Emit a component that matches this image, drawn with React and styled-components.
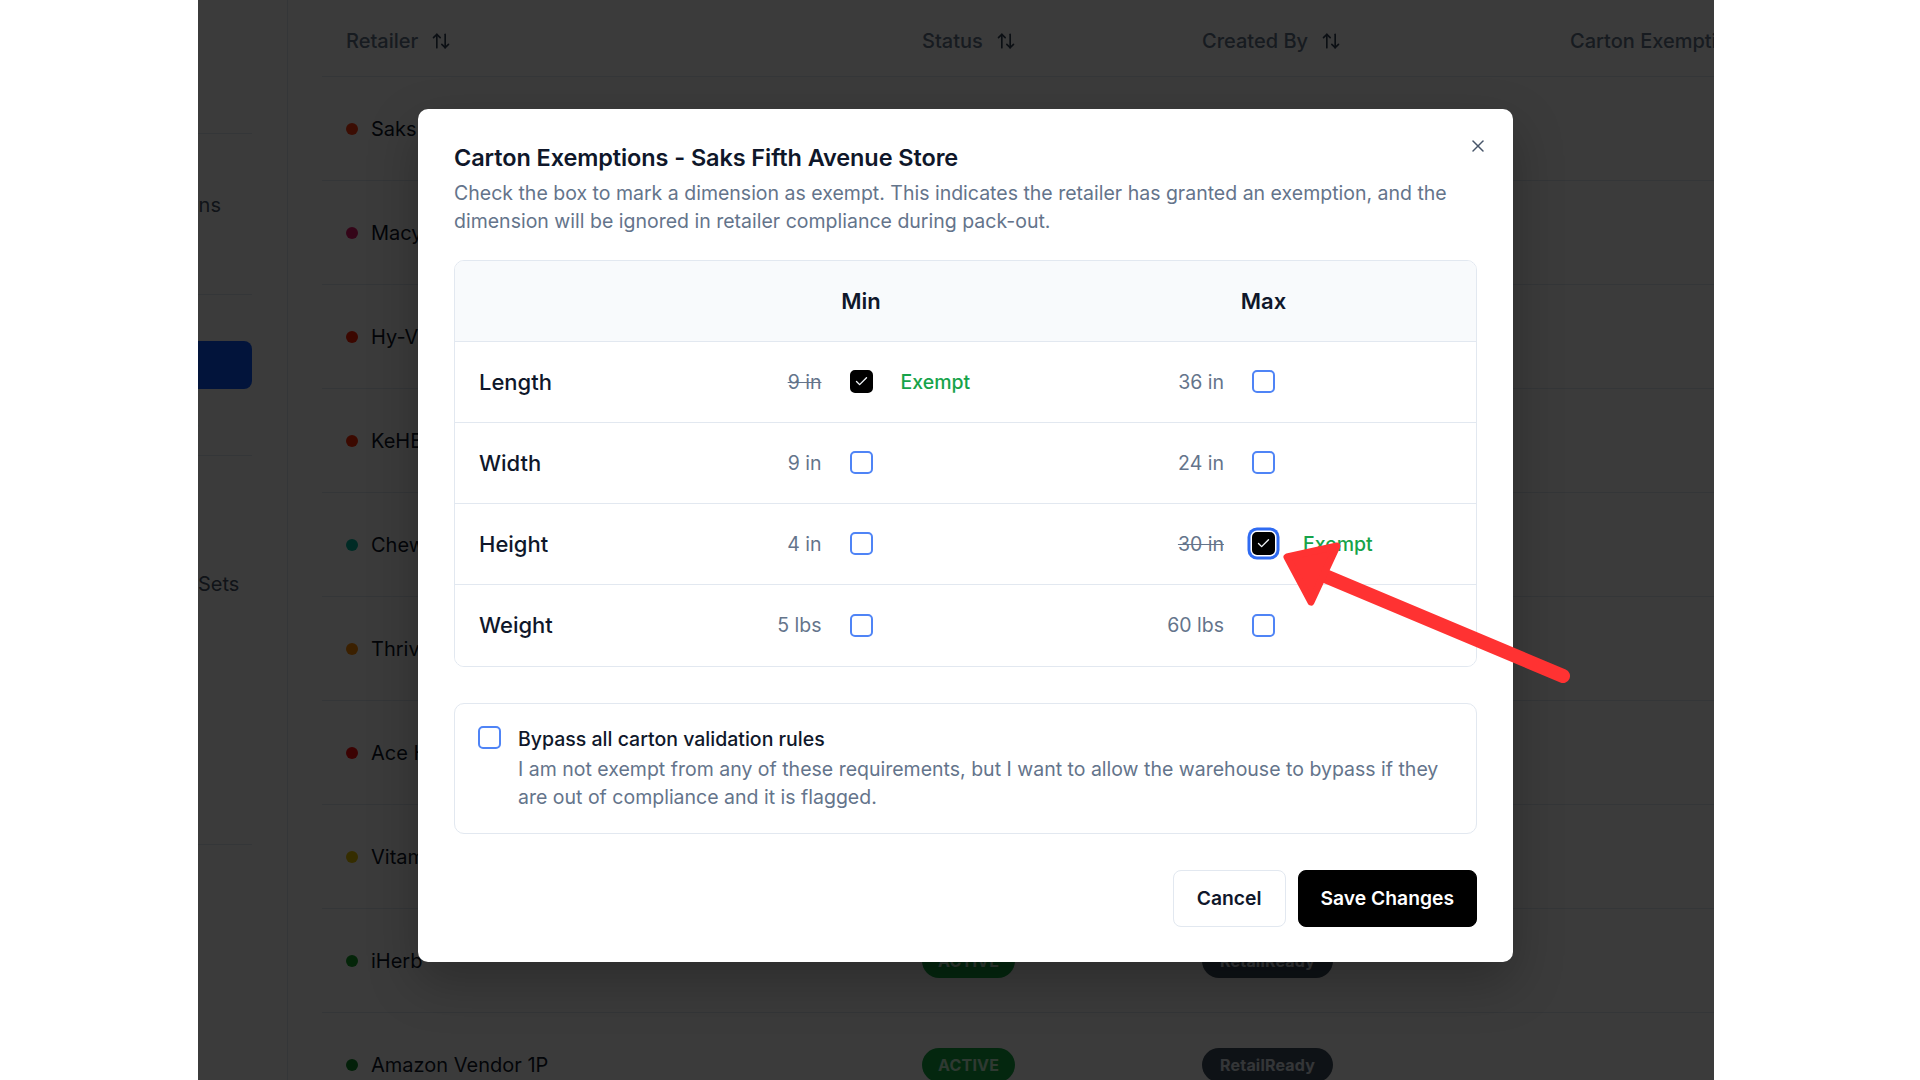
import React from "react";
import styled, { createGlobalStyle } from "styled-components";
import { ArrowUpDown, Check, X } from "lucide-react";

const GlobalStyle = createGlobalStyle`
  html, body {
    margin: 0;
    padding: 0;
    background: #ffffff;
  }
  body {
    font-family: Inter, "Noto Sans", "Liberation Sans", sans-serif;
    -webkit-font-smoothing: antialiased;
  }
  * {
    box-sizing: border-box;
  }
`;

const Page = styled.div`
  position: relative;
  width: 1920px;
  height: 1080px;
  padding-left: 198px;
  background: #ffffff;
  overflow: hidden;
`;

const Frame = styled.div`
  position: relative;
  width: 1516px;
  height: 1080px;
  overflow: hidden;
  background: #ffffff;
`;

const Shell = styled.div`
  display: grid;
  grid-template-columns: 240px 1fr;
  margin-left: -150px;
  height: 100%;
`;

/* ---------- sidebar (mostly cropped off) ---------- */

const Sidebar = styled.aside`
  display: flex;
  flex-direction: column;
  padding: 0 35px 0 20px;
  border-right: 1px solid #e2e8f0;
`;

const NavSection = styled.div`
  height: ${(p) => p.$h}px;
  padding-top: ${(p) => p.$pad}px;
  border-bottom: 1px solid #e2e8f0;
  display: flex;
  flex-direction: column;
`;

const NavItem = styled.div`
  height: ${(p) => (p.$active ? 51 : 28)}px;
  margin-bottom: 19px;
  padding-left: ${(p) => p.$indent || 12}px;
  display: flex;
  align-items: center;
  border-radius: 8px;
  font-size: 20px;
  line-height: 28px;
  white-space: nowrap;
  color: ${(p) => (p.$active ? "#ffffff" : "#475569")};
  background: ${(p) => (p.$active ? "#0a58ff" : "transparent")};
`;

/* ---------- table behind the dialog ---------- */

const Main = styled.main`
  padding-left: 34px;
`;

const Grid = styled.div`
  display: grid;
  grid-template-columns: 576px 280px 368px 420px;
  height: ${(p) => p.$h}px;
  border-bottom: 1px solid #e2e8f0;
`;

const HeadCell = styled.div`
  display: flex;
  align-items: center;
  gap: 13px;
  padding: 6px 24px 0;
  font-size: 20px;
  font-weight: 500;
  color: #64748b;
  white-space: nowrap;
  svg {
    color: #334155;
  }
`;

const Cell = styled.div`
  display: flex;
  align-items: center;
  gap: 13px;
  padding: 0 24px;
  font-size: 20px;
  color: #0f172a;
  white-space: nowrap;
`;

const Dot = styled.span`
  width: 12px;
  height: 12px;
  border-radius: 50%;
  background: ${(p) => p.$color};
  flex-shrink: 0;
`;

const Pill = styled.span`
  display: inline-flex;
  align-items: center;
  height: 34px;
  padding: 0 ${(p) => (p.$tone === "green" ? 16 : 18)}px;
  border-radius: 999px;
  font-size: 16px;
  font-weight: 700;
  letter-spacing: 0.2px;
  color: ${(p) => (p.$tone === "green" ? "#c9f7d8" : "#e2e8f0")};
  background: ${(p) => (p.$tone === "green" ? "#14a844" : "#3f4f5f")};
`;

const Overlay = styled.div`
  position: absolute;
  inset: 0;
  background: rgba(0, 0, 0, 0.768);
`;

/* ---------- dialog ---------- */

const Dialog = styled.div`
  position: absolute;
  left: 220px;
  top: 109px;
  width: 1095px;
  padding: 35px 36px;
  display: flex;
  flex-direction: column;
  background: #ffffff;
  border-radius: 10px;
  box-shadow: 0 20px 50px rgba(0, 0, 0, 0.25);
  color: #0f172a;
`;

const Close = styled.button`
  position: absolute;
  top: 27px;
  right: 25px;
  padding: 0;
  border: 0;
  background: none;
  display: flex;
  color: #475569;
`;

const Title = styled.h2`
  margin: 0;
  font-size: 23.5px;
  line-height: 28px;
  font-weight: 600;
  letter-spacing: -0.1px;
`;

const Description = styled.p`
  margin: 7px 0 0;
  font-size: 19.5px;
  line-height: 28px;
  color: #64748b;
`;

const ExemptTable = styled.div`
  margin-top: 25px;
  border: 1px solid #e2e8f0;
  border-radius: 10px;
  overflow: hidden;
`;

const TableRow = styled.div`
  display: grid;
  grid-template-columns: 216px 380px 1fr;
  align-items: center;
  height: ${(p) => (p.$head ? 80.5 : 81)}px;
  background: ${(p) => (p.$head ? "#f8fafc" : "#ffffff")};
  &:not(:last-child) {
    border-bottom: 1px solid #e2e8f0;
  }
`;

const ColHead = styled.div`
  text-align: center;
  font-size: 22px;
  font-weight: 600;
`;

const Label = styled.div`
  padding-left: 24px;
  font-size: 22px;
  font-weight: 500;
`;

const Limit = styled.div`
  display: grid;
  grid-template-columns: 1fr 23px 1fr;
  column-gap: 28px;
  align-items: center;
`;

const Value = styled.span`
  justify-self: end;
  font-size: 19.5px;
  color: #64748b;
  text-decoration: ${(p) => (p.$struck ? "line-through" : "none")};
`;

const Exempt = styled.span`
  font-size: 19.5px;
  font-weight: 500;
  color: #16a34a;
`;

const Box = styled.span`
  width: 23px;
  height: 23px;
  display: flex;
  align-items: center;
  justify-content: center;
  border-radius: 5px;
  border: 2px solid ${(p) => (p.$checked ? "#000000" : "#4f84f6")};
  background: ${(p) => (p.$checked ? "#000000" : "#ffffff")};
  color: #f1f5f9;
  flex-shrink: 0;
  box-shadow: ${(p) =>
    p.$focus ? "0 0 0 1.5px #ffffff, 0 0 0 4.5px #2f6bf2" : "none"};
`;

const Bypass = styled.div`
  margin-top: 36px;
  display: flex;
  gap: 17px;
  padding: 22px 23px 22px;
  border: 1px solid #e2e8f0;
  border-radius: 10px;
`;

const BypassText = styled.div`
  display: flex;
  flex-direction: column;
  gap: 2px;
  font-size: 19.5px;
  line-height: 28px;
`;

const BypassTitle = styled.span`
  font-weight: 500;
  margin-top: -1px;
`;

const BypassHint = styled.span`
  color: #64748b;
`;

const Footer = styled.div`
  margin-top: 36px;
  display: flex;
  justify-content: flex-end;
  gap: 12px;
`;

const Button = styled.button`
  height: 57px;
  padding: 0 ${(p) => (p.$primary ? 22 : 23)}px;
  border-radius: 8px;
  font-family: inherit;
  font-size: 19.3px;
  font-weight: 600;
  border: 1px solid ${(p) => (p.$primary ? "#000000" : "#e2e8f0")};
  background: ${(p) => (p.$primary ? "#000000" : "#ffffff")};
  color: ${(p) => (p.$primary ? "#ffffff" : "#0f172a")};
`;

/* red call-out arrow drawn on top of the screenshot */
const Annotation = styled.svg`
  position: absolute;
  left: 0;
  top: 0;
  width: 1920px;
  height: 1080px;
  pointer-events: none;
`;

const retailers = [
  { name: "Saks Fifth Avenue Store", color: "#ff3a10" },
  { name: "Macy's", color: "#e0186a" },
  { name: "Hy-Vee", color: "#ff1e00" },
  { name: "KeHE", color: "#ff2a00" },
  { name: "Chewy", color: "#00b8a0" },
  { name: "Thrive Market", color: "#ff8a00" },
  { name: "Ace Hardware", color: "#ff0a0a" },
  { name: "Vitamin Shoppe", color: "#e6c000" },
  { name: "iHerb", color: "#12a028" },
  { name: "Amazon Vendor 1P", color: "#0e8a2a" },
];

const dimensions = [
  { label: "Length", min: "9 in", max: "36 in", minEx: true },
  { label: "Width", min: "9 in", max: "24 in" },
  { label: "Height", min: "4 in", max: "30 in", maxEx: true, focus: true },
  { label: "Weight", min: "5 lbs", max: "60 lbs" },
];

function Checkbox({ checked, focus }) {
  return (
    <Box $checked={checked} $focus={focus}>
      {checked && <Check size={15} strokeWidth={2.2} />}
    </Box>
  );
}

function LimitCell({ value, exempt, focus }) {
  return (
    <Limit>
      <Value $struck={exempt}>{value}</Value>
      <Checkbox checked={exempt} focus={focus} />
      {exempt ? <Exempt>Exempt</Exempt> : <span />}
    </Limit>
  );
}

export default function App() {
  return (
    <>
      <GlobalStyle />
      <Page>
        <Frame>
          <Shell>
            <Sidebar>
              <NavSection $h={134} $pad={0} />
              <NavSection $h={161} $pad={57}>
                <NavItem $indent={41}>Integrations</NavItem>
              </NavSection>
              <NavSection $h={161} $pad={46}>
                <NavItem $active>Retailers</NavItem>
                <NavItem $indent={39}>Locations</NavItem>
              </NavSection>
              <NavSection $h={389} $pad={114}>
                <NavItem $indent={49}>Packing Sets</NavItem>
              </NavSection>
            </Sidebar>

            <Main>
              <Grid $h={77}>
                <HeadCell>
                  Retailer <ArrowUpDown size={20} />
                </HeadCell>
                <HeadCell>
                  Status <ArrowUpDown size={20} />
                </HeadCell>
                <HeadCell>
                  Created By <ArrowUpDown size={20} />
                </HeadCell>
                <HeadCell>Carton Exemptions</HeadCell>
              </Grid>
              {retailers.map((r) => (
                <Grid key={r.name} $h={104}>
                  <Cell>
                    <Dot $color={r.color} />
                    {r.name}
                  </Cell>
                  <Cell>
                    <Pill $tone="green">ACTIVE</Pill>
                  </Cell>
                  <Cell>
                    <Pill>RetailReady</Pill>
                  </Cell>
                  <Cell />
                </Grid>
              ))}
            </Main>
          </Shell>

          <Overlay />

          <Dialog>
            <Close aria-label="Close">
              <X size={20} strokeWidth={1.8} />
            </Close>
            <Title>Carton Exemptions - Saks Fifth Avenue Store</Title>
            <Description>
              Check the box to mark a dimension as exempt. This indicates the
              retailer has granted an exemption, and the dimension will be
              ignored in retailer compliance during pack-out.
            </Description>

            <ExemptTable>
              <TableRow $head>
                <span />
                <ColHead>Min</ColHead>
                <ColHead>Max</ColHead>
              </TableRow>
              {dimensions.map((d) => (
                <TableRow key={d.label}>
                  <Label>{d.label}</Label>
                  <LimitCell value={d.min} exempt={d.minEx} />
                  <LimitCell value={d.max} exempt={d.maxEx} focus={d.focus} />
                </TableRow>
              ))}
            </ExemptTable>

            <Bypass>
              <Checkbox />
              <BypassText>
                <BypassTitle>Bypass all carton validation rules</BypassTitle>
                <BypassHint>
                  I am not exempt from any of these requirements, but I want to
                  allow the warehouse to bypass if they are out of compliance
                  and it is flagged.
                </BypassHint>
              </BypassText>
            </Bypass>

            <Footer>
              <Button>Cancel</Button>
              <Button $primary>Save Changes</Button>
            </Footer>
          </Dialog>
        </Frame>

        <Annotation viewBox="0 0 1920 1080">
          <line
            x1="1563"
            y1="676"
            x2="1318"
            y2="573"
            stroke="#ff3232"
            strokeWidth="14"
            strokeLinecap="round"
          />
          <polygon
            points="1287,557 1337,546 1311,602"
            fill="#ff3232"
            stroke="#ff3232"
            strokeWidth="7"
            strokeLinejoin="round"
          />
        </Annotation>
      </Page>
    </>
  );
}
